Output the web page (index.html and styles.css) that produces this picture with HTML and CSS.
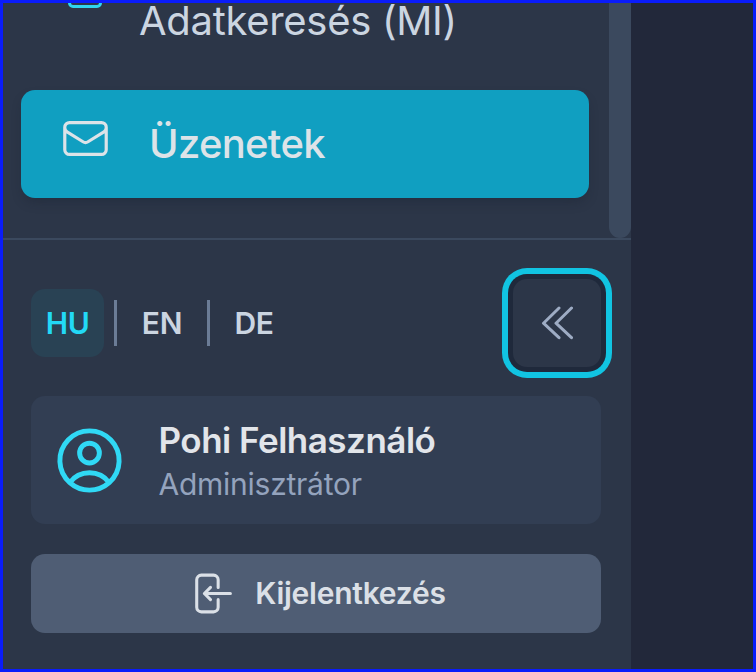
FILE: index.html
```html
<!DOCTYPE html>
<html lang="hu">
<head>
<meta charset="utf-8">
<title>Üzenetek</title>
<link rel="stylesheet" href="styles.css">
</head>
<body>
<div class="frame">
  <aside class="sidebar">
    <div class="nav-wrap">
      <nav class="nav">
        <a class="nav-item">
          <svg class="icon-data" viewBox="0 0 34 34"><rect x="1.5" y="1.5" width="31" height="31" rx="3.5"/></svg>
          <span>Adatkeresés (MI)</span>
        </a>
        <a class="nav-item active">
          <svg class="icon-mail" viewBox="0 0 24 24"><path d="M21.75 6.75v10.5a2.25 2.25 0 0 1-2.25 2.25h-15a2.25 2.25 0 0 1-2.25-2.25V6.75m19.5 0A2.25 2.25 0 0 0 19.5 4.5h-15a2.25 2.25 0 0 0-2.25 2.25m19.5 0v.243a2.25 2.25 0 0 1-1.07 1.916l-7.5 4.615a2.25 2.25 0 0 1-2.36 0L3.32 8.91a2.25 2.25 0 0 1-1.07-1.916V6.75"/></svg>
          <span>Üzenetek</span>
        </a>
      </nav>
      <div class="scrollbar"></div>
    </div>
    <footer class="footer">
      <div class="controls">
        <div class="langs">
          <button class="lang current">HU</button>
          <i class="sep"></i>
          <button class="lang">EN</button>
          <i class="sep"></i>
          <button class="lang">DE</button>
        </div>
        <button class="collapse" aria-label="Összecsukás">
          <svg viewBox="0 0 32 34"><path d="M18 2 2.500 17.200l15.500 14.500M30.500 2 15 17.200l15.500 14.500"/></svg>
        </button>
      </div>
      <div class="user">
        <svg class="icon-user" viewBox="0 0 24 24"><path d="M17.982 18.725A7.488 7.488 0 0 0 12 15.75a7.488 7.488 0 0 0-5.982 2.975m11.963 0a9 9 0 1 0-11.963 0m11.963 0A8.966 8.966 0 0 1 12 21a8.966 8.966 0 0 1-5.982-2.275M15 9.75a3 3 0 1 1-6 0 3 3 0 0 1 6 0Z"/></svg>
        <div>
          <div class="name">Pohi Felhasználó</div>
          <div class="role">Adminisztrátor</div>
        </div>
      </div>
      <button class="logout">
        <svg class="icon-logout" viewBox="0 0 24 24"><path d="M15.75 9V5.25A2.25 2.25 0 0 0 13.5 3h-6a2.25 2.25 0 0 0-2.25 2.25v13.5A2.25 2.25 0 0 0 7.5 21h6a2.25 2.25 0 0 0 2.25-2.25V15M12 9l-3 3m0 0 3 3m-3-3h12.75"/></svg>
        <span>Kijelentkezés</span>
      </button>
    </footer>
  </aside>
  <main class="content"></main>
</div>
</body>
</html>
```
FILE: styles.css
```css
* { box-sizing: border-box; }
body { margin: 0; font-family: Inter, "Liberation Sans", sans-serif; }
button { border: 0; margin: 0; font: inherit; }
svg { display: block; flex: none; fill: none; stroke: currentColor; stroke-width: 1.5; stroke-linecap: round; stroke-linejoin: round; }

.frame { display: flex; width: 756px; height: 672px; border: 3px solid #0a1cfa; overflow: hidden; background: #22283a; }
.sidebar { display: flex; flex-direction: column; width: 628px; background: #2c3648; }
.content { flex: 1; background: #22283a; }

.nav-wrap { display: flex; height: 235px; overflow: hidden; }
.nav { flex: 1; display: flex; flex-direction: column; justify-content: flex-end; gap: 16px; padding: 0 20px 40px 18px; }
.nav-item { flex: none; display: flex; align-items: center; height: 108px; padding-left: 38px; border-radius: 14px; font-size: 40px; line-height: 40px; letter-spacing: -.3px; color: #cbd5e1; white-space: nowrap; }
.nav-item:not(.active) span { padding-top: 1px; }
.nav-item.active { background: #109fc1; color: #dce3e8; font-weight: 500; letter-spacing: -.7px; box-shadow: 0 6px 12px -3px rgba(20, 28, 42, .35); }
.icon-data { align-self: flex-start; width: 34px; height: 34px; margin: 8px 37px 0 9px; color: #30d5f0; stroke-width: 3; }
.icon-mail { width: 51px; height: 51px; margin: 0 38.5px 11px .5px; }
.scrollbar { width: 22px; border-radius: 0 0 11px 11px; background: #3b495e; }

.footer { flex: 1; border-top: 2px solid #3b495e; padding: 39px 30px 0 28px; }
.controls { display: flex; justify-content: space-between; align-items: center; height: 88px; margin-bottom: 29px; }
.langs { display: flex; align-items: center; gap: 10px; }
.lang { height: 68px; padding: 0 14.7px; border-radius: 14px; background: none; color: #cbd5e1; font-size: 30px; font-weight: 600; line-height: 68px; letter-spacing: -.35px; }
.lang.current { background: #294254; color: #22d9f6; }
.sep { width: 3px; height: 46px; background: #6b7c96; }
.collapse { display: flex; align-items: center; justify-content: center; width: 88px; height: 88px; padding: 0; border-radius: 14px; background: #2c3648; color: #9eacc4; box-shadow: 0 0 0 5px #1f293b, 0 0 0 11px #11c4e2; }
.collapse svg { width: 32px; height: 34px; stroke-width: 3; }

.user { display: flex; align-items: center; height: 128px; margin-bottom: 30px; padding-left: 19px; border-radius: 14px; background: #323e53; }
.icon-user { width: 79px; height: 79px; margin-right: 29.5px; color: #30d9f5; }
.name { padding-top: 1px; font-size: 35px; font-weight: 600; line-height: 46px; letter-spacing: -.5px; color: #e2e5ea; }
.role { padding-top: 1px; font-size: 30px; line-height: 40px; letter-spacing: -.25px; color: #94a3bd; }

.logout { display: flex; align-items: center; justify-content: center; width: 570px; height: 79px; padding: 0 0 1px 0; border-radius: 14px; background: #4f5d74; color: #dbe0e7; font-size: 30px; font-weight: 600; letter-spacing: -.25px; }
.icon-logout { width: 49px; height: 49px; margin: 1px 20px 0 0; }
```
